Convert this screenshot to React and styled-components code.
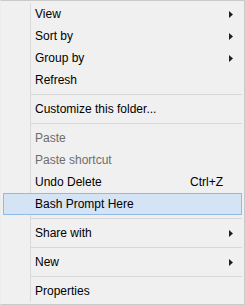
import React from "react";
import styled, { createGlobalStyle } from "styled-components";

const GlobalStyle = createGlobalStyle`
  html, body {
    margin: 0;
    padding: 0;
    background: #f0f0f0;
  }
`;

const items = [
  { label: "View", submenu: true },
  { label: "Sort by", submenu: true },
  { label: "Group by", submenu: true },
  { label: "Refresh" },
  { separator: true },
  { label: "Customize this folder..." },
  { separator: true },
  { label: "Paste", disabled: true },
  { label: "Paste shortcut", disabled: true },
  { label: "Undo Delete", shortcut: "Ctrl+Z" },
  { label: "Bash Prompt Here", active: true },
  { separator: true },
  { label: "Share with", submenu: true },
  { separator: true },
  { label: "New", submenu: true },
  { separator: true },
  { label: "Properties" },
];

const Arrow = () => (
  <svg width="4" height="7" viewBox="0 0 4 7">
    <path d="M0 0 L4 3.5 L0 7 Z" fill="#202020" />
  </svg>
);

const App = () => {
  return (
    <>
      <GlobalStyle />
      <Menu>
        <List>
          {items.map((item, i) =>
            item.separator ? (
              <Separator key={i} />
            ) : (
              <Item key={i} $active={item.active} $disabled={item.disabled}>
                <Label>{item.label}</Label>
                {item.shortcut && <Shortcut>{item.shortcut}</Shortcut>}
                {item.submenu && (
                  <ArrowSlot>
                    <Arrow />
                  </ArrowSlot>
                )}
              </Item>
            )
          )}
        </List>
      </Menu>
    </>
  );
};

const Menu = styled.div`
  width: 245px;
  height: 305px;
  box-sizing: border-box;
  background: #f0f0f0;
  border: 1px solid #cacaca;
  border-left-color: #ededed;
  font-family: "Liberation Sans", Arial, sans-serif;
  font-size: 12px;
  color: #000;
`;

const List = styled.div`
  display: flex;
  flex-direction: column;
  padding: 2px;
  height: 100%;
  box-sizing: border-box;
  background-image: linear-gradient(
    to right,
    transparent 27px,
    #dadada 27px,
    #dadada 28px,
    transparent 28px
  );
  background-origin: content-box;
  background-clip: content-box;
  background-repeat: no-repeat;
`;

const Item = styled.div`
  height: 22px;
  box-sizing: border-box;
  display: flex;
  align-items: center;
  padding-left: 31px;
  padding-right: 8px;
  border: 1px solid ${(p) => (p.$active ? "#90bbe8" : "transparent")};
  background: ${(p) => (p.$active ? "#d5e4f4" : "transparent")};
  color: ${(p) => (p.$disabled ? "#6d6d6d" : "#000")};
  white-space: nowrap;
`;

const Label = styled.span`
  flex: 1;
  line-height: 20px;
`;

const Shortcut = styled.span`
  margin-right: 10px;
  line-height: 20px;
`;

const ArrowSlot = styled.span`
  display: flex;
  align-items: center;
`;

const Separator = styled.div`
  height: 7px;
  margin-left: 28px;
  background: linear-gradient(
    to bottom,
    transparent 3px,
    #d7d7d7 3px,
    #d7d7d7 4px,
    transparent 4px
  );
`;

export default App;
